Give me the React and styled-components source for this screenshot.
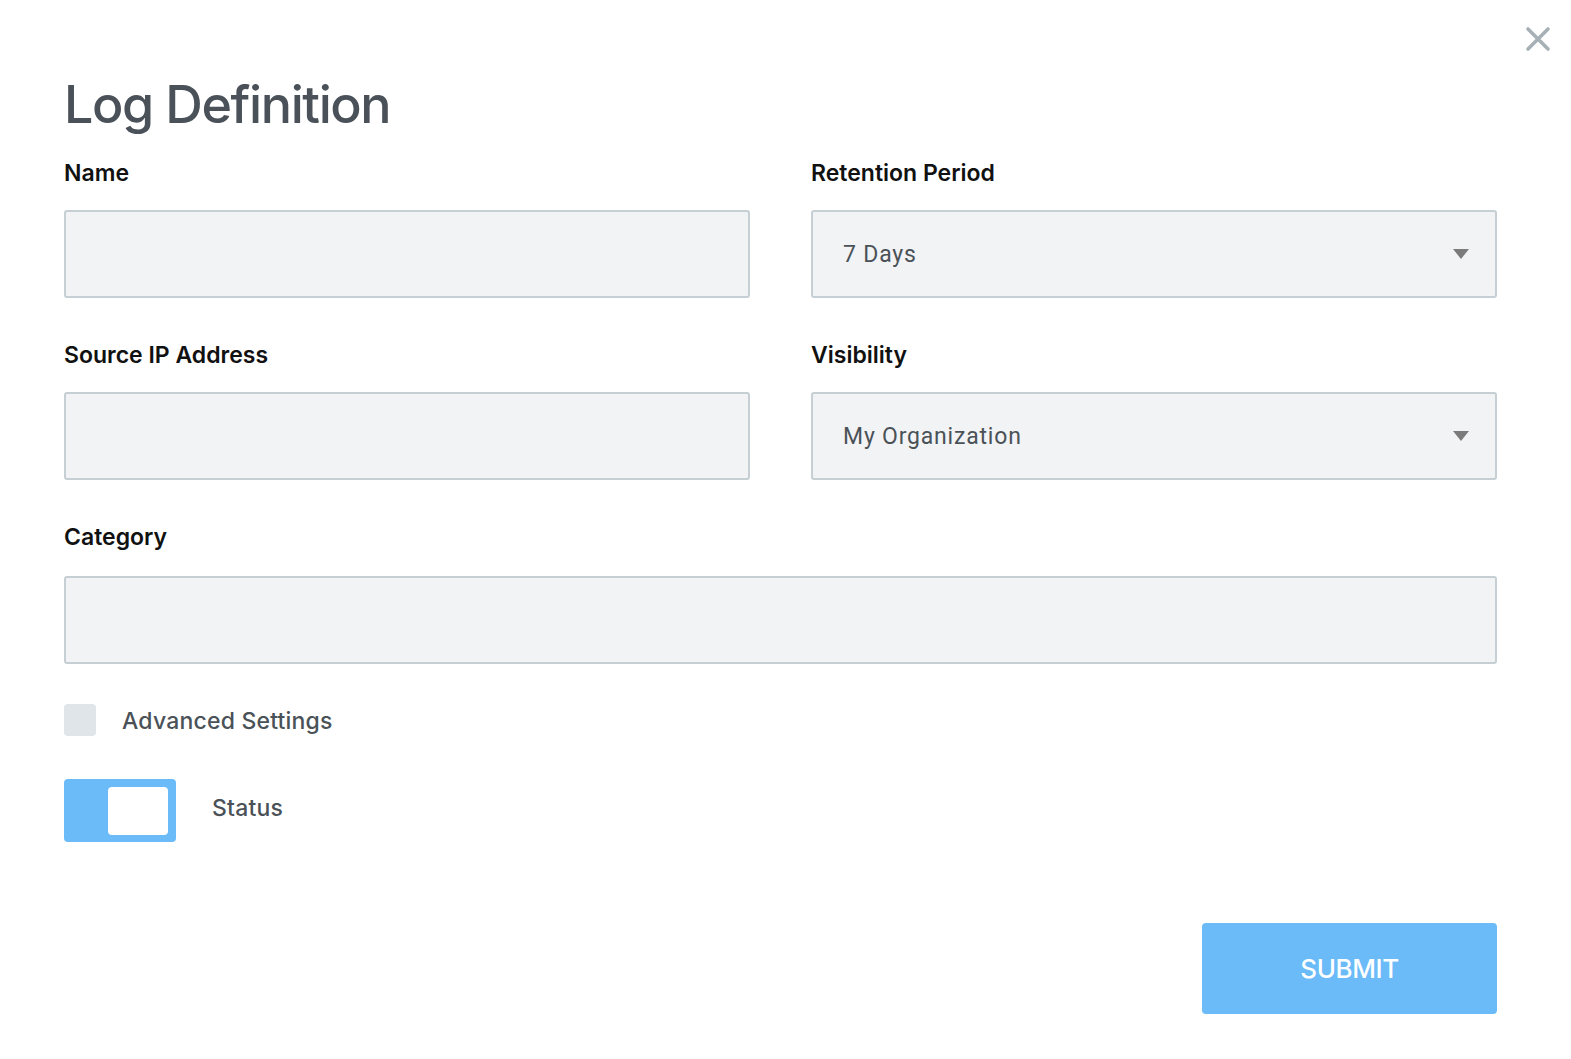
import React from "react";
import styled, { createGlobalStyle } from "styled-components";

const Global = createGlobalStyle`
  html, body { margin: 0; padding: 0; background: #fff; }
  body { font-family: Inter, "Noto Sans", sans-serif; }
  * { box-sizing: border-box; }
`;

const Page = styled.div`
  position: relative;
  width: 1571px;
  min-height: 1059px;
  padding: 70px 74px 0 64px;
`;

const Close = styled.button`
  position: absolute;
  top: 26px;
  right: 20px;
  width: 26px;
  height: 26px;
  border: none;
  background: none;
  padding: 0;
  cursor: pointer;
`;

const Title = styled.h1`
  margin: 0;
  font-family: Inter, sans-serif;
  font-weight: 500;
  font-size: 52px;
  letter-spacing: -1.4px;
  line-height: 70px;
  color: #4a5158;
`;

const Grid = styled.div`
  display: grid;
  grid-template-columns: 1fr 1fr;
  column-gap: 61px;
  row-gap: 42px;
  margin-top: 18px;
`;

const Field = styled.div`
  display: flex;
  flex-direction: column;
  grid-column: ${(p) => (p.$full ? "1 / -1" : "auto")};
`;

const Label = styled.label`
  font-family: Inter, sans-serif;
  font-weight: 600;
  font-size: 23px;
  letter-spacing: 0;
  line-height: 30px;
  color: #111;
  margin-bottom: ${(p) => (p.$loose ? "24px" : "22px")};
`;

const Input = styled.input`
  height: 88px;
  width: 100%;
  background: #f2f3f5;
  border: 2px solid #c6cfd3;
  border-radius: 3px;
  padding: 0 30px;
  font-size: 22px;
  outline: none;
`;

const Select = styled.div`
  height: 88px;
  background: #f2f3f5;
  border: 2px solid #c6cfd3;
  border-radius: 3px;
  padding: 0 26px 0 30px;
  display: flex;
  align-items: center;
  justify-content: space-between;
  font-family: Roboto, sans-serif;
  font-size: 23px;
  letter-spacing: 0.8px;
  color: #4a5258;
`;

const Caret = styled.span`
  width: 0;
  height: 0;
  border-left: 8px solid transparent;
  border-right: 8px solid transparent;
  border-top: 10px solid #7b7b7b;
`;

const CheckRow = styled.div`
  display: flex;
  align-items: center;
  gap: 26px;
  margin-top: 40px;
`;

const Checkbox = styled.span`
  width: 32px;
  height: 32px;
  border-radius: 4px;
  background: #dfe5e8;
`;

const OptionText = styled.span`
  font-family: Inter, sans-serif;
  font-weight: 500;
  font-size: 23px;
  letter-spacing: 0.2px;
  color: #4a5258;
  margin-top: ${(p) => (p.$raise ? "-5px" : "2px")};
`;

const ToggleRow = styled.div`
  display: flex;
  align-items: center;
  gap: 36px;
  margin-top: 43px;
`;

const Toggle = styled.span`
  width: 112px;
  height: 63px;
  border-radius: 4px;
  background: #6bbbf9;
  display: flex;
  align-items: center;
  justify-content: flex-end;
  padding-right: 8px;
`;

const Knob = styled.span`
  width: 60px;
  height: 48px;
  border-radius: 4px;
  background: #fff;
`;

const Footer = styled.div`
  display: flex;
  justify-content: flex-end;
  margin-top: 81px;
`;

const Submit = styled.button`
  width: 295px;
  height: 91px;
  border: none;
  border-radius: 4px;
  background: #6bbbf9;
  color: #fff;
  font-family: Inter, sans-serif;
  font-weight: 500;
  font-size: 26px;
  letter-spacing: -0.4px;
  cursor: pointer;
`;

export default function App() {
  return (
    <>
      <Global />
      <Page>
        <Close aria-label="Close">
          <svg width="26" height="26" viewBox="0 0 26 26">
            <path d="M3 3 L23 23 M23 3 L3 23" stroke="#a7b1b5" strokeWidth="3.6" strokeLinecap="round" />
          </svg>
        </Close>
        <Title>Log Definition</Title>
        <Grid>
          <Field>
            <Label>Name</Label>
            <Input />
          </Field>
          <Field>
            <Label>Retention Period</Label>
            <Select>
              <span>7 Days</span>
              <Caret />
            </Select>
          </Field>
          <Field>
            <Label>Source IP Address</Label>
            <Input />
          </Field>
          <Field>
            <Label>Visibility</Label>
            <Select>
              <span>My Organization</span>
              <Caret />
            </Select>
          </Field>
          <Field $full>
            <Label $loose>Category</Label>
            <Input />
          </Field>
        </Grid>
        <CheckRow>
          <Checkbox />
          <OptionText>Advanced Settings</OptionText>
        </CheckRow>
        <ToggleRow>
          <Toggle>
            <Knob />
          </Toggle>
          <OptionText $raise>Status</OptionText>
        </ToggleRow>
        <Footer>
          <Submit>SUBMIT</Submit>
        </Footer>
      </Page>
    </>
  );
}
